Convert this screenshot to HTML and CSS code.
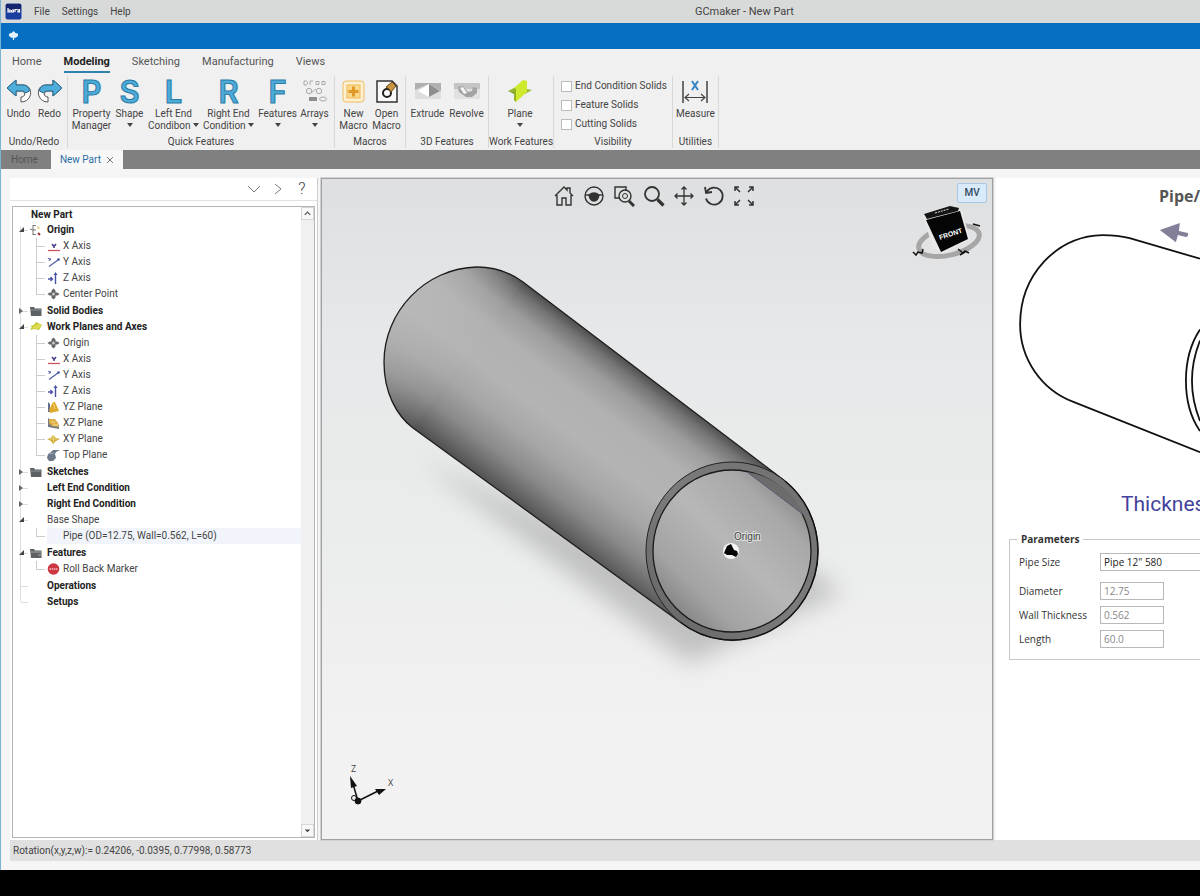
FILE: index.html
```html
<!DOCTYPE html>
<html lang="en">
<head>
<meta charset="utf-8">
<title>GCmaker - New Part</title>
<link rel="stylesheet" href="styles.css">
</head>
<body>
<svg class="defs" width="0" height="0" aria-hidden="true">
  <symbol id="i-x" viewBox="0 0 14 12"><path d="M1 10.500h12" stroke="#c8545c" stroke-width="1.300"/><path d="M5 4l2 2.500L9 4M7 6v2" stroke="#4a3c8c" stroke-width="1.500" fill="none"/></symbol>
  <symbol id="i-y" viewBox="0 0 14 12"><path d="M2 10.500L11 4" stroke="#5561a8" stroke-width="1.300"/><circle cx="11.500" cy="3.500" r="1.300" fill="#3f4fa5"/><path d="M1 2l3 2M2 5l1.500-3" stroke="#5561a8" fill="none"/></symbol>
  <symbol id="i-z" viewBox="0 0 14 12"><path d="M8.500 12V2" stroke="#4951a2" stroke-width="1.400"/><path d="M6.500 3h4l-2-3z" fill="#4951a2"/><path d="M1 7h4M3.500 5l2 2-2 2" stroke="#4951a2" fill="none" stroke-width="1.300"/></symbol>
  <symbol id="i-pt" viewBox="0 0 14 12"><path d="M6.500 .5l2 2v2h2l2 1.500-2 1.500h-2v2l-2 2-2-2v-2h-2L.5 6l2-1.500h2v-2z" fill="#666"/><circle cx="6.500" cy="6" r="1.500" fill="#c8c8c8"/></symbol>
  <symbol id="i-dir" viewBox="0 0 14 12"><path d="M1 2h4l1 1.500h6.500V11H2z" fill="#5d6163"/><path d="M2 5h10.500M9 8h4" stroke="#a5aaac"/></symbol>
  <symbol id="i-folder" viewBox="0 0 14 12"><path d="M1 2h4l1 1.500h6.500V11H2z" fill="#5d6163"/><path d="M2 5h10.500" stroke="#8d9294"/></symbol>
  <symbol id="i-origin" viewBox="0 0 14 12"><path d="M4 1v10M4 1.500h3M4 6h3M4 10.500h3M1 5l3 1" stroke="#777" fill="none"/><path d="M8 2l3 2-2 1z" fill="#d8b840"/><path d="M9 9l2 2" stroke="#a03030" stroke-width="2"/></symbol>
  <symbol id="i-wp" viewBox="0 0 14 12"><path d="M1 9l2-3-2-1 4-1 2-3 6 3-3 5-5-1z" fill="#c3c837"/><path d="M3 7l6-4 4 1-4 4z" fill="#dfdc52"/></symbol>
  <symbol id="i-yz" viewBox="0 0 14 12"><path d="M1 1v10h2V3z" fill="#5f6f8d"/><path d="M2 9l4-8h2l4 9-9 2z" fill="#dfaa2d"/><path d="M6 1l2 7" stroke="#f2d36f"/></symbol>
  <symbol id="i-xz" viewBox="0 0 14 12"><path d="M1 1v9l11 2V8z" fill="#767b80"/><path d="M2 2h6l3 4 1 4-7-1-3-3z" fill="#dcae43"/><path d="M4 5h4M6 8h5" stroke="#f5df9c"/></symbol>
  <symbol id="i-xy" viewBox="0 0 14 12"><path d="M0 6l4-1 2-3 3 3 4 1-4 2-3 3-2-3z" fill="#cfaa2e"/><path d="M3 6h7M6.500 3v6" stroke="#ecd77b"/></symbol>
  <symbol id="i-top" viewBox="0 0 14 12"><path d="M1 5l3-2 2-2h7l-4 2-1 2 1 4-3 3H2L0 9z" fill="#6b7889"/><path d="M2 5l5-1" stroke="#a3adb9"/></symbol>
  <symbol id="i-stop" viewBox="0 0 14 12"><circle cx="6.500" cy="6" r="5.800" fill="#cc3740"/><path d="M2.500 6h8" stroke="#f0a0a6" stroke-width="2" stroke-dasharray="1.500 .7"/></symbol>
</svg>

<div class="app">
  <header class="titlebar">
    <svg class="logo" viewBox="0 0 17 17" aria-hidden="true"><rect x=".5" y=".5" width="16" height="16" rx="2" fill="#1b3f9e"/><path d="M1 1h15v7H1z" fill="#14246d"/><path d="M3 5v4h2V7H3M6.500 7v2h2V7h-1.500M10 9V6.500h2M13 6v3h1.500V6" stroke="#fff" fill="none" stroke-width="1.200"/></svg>
    <nav class="menu"><a href="#">File</a><a href="#">Settings</a><a href="#">Help</a></nav>
    <h1 class="app-title">GCmaker - New Part</h1>
  </header>

  <div class="bluebar"><svg viewBox="0 0 8 8" aria-hidden="true"><path d="M4 0l1.500 1.500L8 2.500v2L6 6H4.500v2h-1V6H2L0 4.500v-2l2.500-1z" fill="#e4f2fc"/></svg></div>

  <section class="ribbon">
    <nav class="tabs">
      <a href="#">Home</a><a href="#" class="on">Modeling</a><a href="#">Sketching</a><a href="#">Manufacturing</a><a href="#">Views</a>
    </nav>
    <div class="groups">
      <div class="group">
        <div class="tools">
          <button class="w31"><svg class="ic" viewBox="0 0 28 26"><path d="M2 10l9-8v5h7c11 0 10 17-2 17v-5c5 0 5-6 0-6h-5v5z" fill="#fff" stroke="#555"/><path d="M2 10l9-8v5h7c4 0 6.500 3 6.500 6l-4 2c0-1-2-2-3.500-2h-6v5z" fill="#4eaedb" stroke="#28668a"/></svg><span>Undo</span></button>
          <button class="w31"><svg class="ic" viewBox="0 0 28 26"><path d="M26 10l-9-8v5h-7C-1 7 0 24 12 24v-5c-5 0-5-6 0-6h5v5z" fill="#fff" stroke="#555"/><path d="M26 10l-9-8v5h-7c-4 0-6.500 3-6.500 6l4 2c0-1 2-2 3.500-2h6v5z" fill="#4eaedb" stroke="#28668a"/></svg><span>Redo</span></button>
        </div>
        <div class="caption">Undo/Redo</div>
      </div>
      <div class="group quick">
        <div class="tools">
          <button class="w41"><b class="letter">P</b><span>Property<br>Manager</span></button>
          <button class="w35"><b class="letter">S</b><span>Shape</span><i class="caret"></i></button>
          <button class="w53"><b class="letter">L</b><span>Left End<br>Condibon <i class="caret"></i></span></button>
          <button class="w57"><b class="letter">R</b><span>Right End<br>Condition <i class="caret"></i></span></button>
          <button class="w41"><b class="letter">F</b><span>Features</span><i class="caret"></i></button>
          <button class="w33"><svg class="ic" viewBox="0 0 28 26"><g fill="none" stroke="#aaa"><path d="M3 3v4h2c2 0 2-4 0-4zM9 7V3h3M15 3.500h3v3h-3zM21 3.500h3v3h-3z"/><circle cx="8" cy="13" r="2.700"/><circle cx="18" cy="13" r="2.700"/><path d="M10 15l5-4"/><ellipse cx="22" cy="21" rx="3.500" ry="2"/></g><path d="M8 19h8v4H8z" fill="#8d8d8d"/></svg><span>Arrays</span><i class="caret"></i></button>
        </div>
        <div class="caption">Quick Features</div>
      </div>
      <div class="group">
        <div class="tools">
          <button class="w33"><svg class="ic" viewBox="0 0 28 26"><rect x="3" y="3" width="21" height="21" rx="3" fill="#fdf0d0" stroke="#efbe62"/><rect x="7" y="7" width="13" height="13" fill="#fad98c" stroke="#efb958"/><path d="M12 8.500h3V12h3.500v3H15v3.500h-3V15H8.500v-3H12z" fill="#df9a27"/></svg><span>New<br>Macro</span></button>
          <button class="w33"><svg class="ic" viewBox="0 0 28 26"><path d="M4 3h15l5 5v16H4z" fill="#fafafa" stroke="#333" stroke-width="1.500"/><ellipse cx="14" cy="15" rx="4" ry="4" fill="none" stroke="#222" stroke-width="2"/><path d="M13 9l6-5 4 4-5 6-2-3z" fill="#ca953f" stroke="#6b4a1c"/></svg><span>Open<br>Macro</span></button>
        </div>
        <div class="caption">Macros</div>
      </div>
      <div class="group">
        <div class="tools">
          <button class="w39"><svg class="ic" viewBox="0 0 28 26"><path d="M1 5h26v16H1z" fill="#dedede"/><path d="M1 5h26v8L15 6 1 12z" fill="#b0b0b0"/><path d="M4 13l11-7v13z" fill="#fff"/><path d="M15 6l11 7-11 6z" fill="#8e8e8e"/></svg><span>Extrude</span></button>
          <button class="w39"><svg class="ic" viewBox="0 0 28 26"><path d="M1 5h26v16H1z" fill="#e1e1e1"/><path d="M1 5h26v6H1z" fill="#c4c4c4"/><path d="M5 9l5-1 5 6 4-1 1-4 4 1v5l-5 4h-6l-7-5z" fill="#a3a3a3"/><path d="M7 10l3-1 4 6-3 1z" fill="#f4f4f4"/></svg><span>Revolve</span></button>
        </div>
        <div class="caption">3D Features</div>
      </div>
      <div class="group tight">
        <div class="tools">
          <button class="w62"><svg class="ic" viewBox="0 0 28 26"><path d="M2 13l8-4 16 3-9 5z" fill="#93b930"/><path d="M2 13l6 1v2z" fill="#7c9e28"/><path d="M8 10l9-8 4 1v11L10 24l-2-2z" fill="#cfe92f"/><path d="M8 10l2 1v13l-2-2z" fill="#8eb521"/></svg><span>Plane</span><i class="caret"></i></button>
        </div>
        <div class="caption">Work Features</div>
      </div>
      <div class="group">
        <div class="checks">
          <label><input type="checkbox">End Condition Solids</label>
          <label><input type="checkbox">Feature Solids</label>
          <label><input type="checkbox">Cutting Solids</label>
        </div>
        <div class="caption">Visibility</div>
      </div>
      <div class="group">
        <div class="tools">
          <button class="w41"><svg class="ic" viewBox="0 0 28 26"><path d="M2 3v22M26 3v22" stroke="#444" stroke-width="1.500"/><path d="M4 19.500h20M8 16l-4 3.500L8 23M20 16l4 3.500-4 3.500" stroke="#444" stroke-width="1.200" fill="none"/><path d="M11 3l6 9M17 3l-6 9" stroke="#3584c4" stroke-width="2"/></svg><span>Measure</span></button>
        </div>
        <div class="caption">Utilities</div>
      </div>
    </div>
  </section>

  <nav class="doctabs"><a href="#">Home</a><a href="#" class="on">New Part <svg viewBox="0 0 8 8"><path d="M1 1l6 6M7 1L1 7" stroke="#777"/></svg></a></nav>

  <main class="work">
    <aside class="browser">
      <div class="browser-tools">
        <button aria-label="Collapse"><svg viewBox="0 0 14 14"><path d="M1 4l6 6 6-6"/></svg></button>
        <button aria-label="Next"><svg viewBox="0 0 14 14"><path d="M4 2l6 5-6 5"/></svg></button>
        <button class="help" aria-label="Help">?</button>
      </div>
      <div class="treebox">
        <div class="tree">
          <div class="root">New Part</div>
          <ul class="top">
            <li><div class="row open"><svg><use href="#i-origin"/></svg><b>Origin</b></div>
              <ul>
                <li><svg><use href="#i-x"/></svg>X Axis</li>
                <li><svg><use href="#i-y"/></svg>Y Axis</li>
                <li><svg><use href="#i-z"/></svg>Z Axis</li>
                <li><svg><use href="#i-pt"/></svg>Center Point</li>
              </ul></li>
            <li><div class="row shut"><svg><use href="#i-folder"/></svg><b>Solid Bodies</b></div></li>
            <li><div class="row open"><svg><use href="#i-wp"/></svg><b>Work Planes and Axes</b></div>
              <ul>
                <li><svg><use href="#i-pt"/></svg>Origin</li>
                <li><svg><use href="#i-x"/></svg>X Axis</li>
                <li><svg><use href="#i-y"/></svg>Y Axis</li>
                <li><svg><use href="#i-z"/></svg>Z Axis</li>
                <li><svg><use href="#i-yz"/></svg>YZ Plane</li>
                <li><svg><use href="#i-xz"/></svg>XZ Plane</li>
                <li><svg><use href="#i-xy"/></svg>XY Plane</li>
                <li><svg><use href="#i-top"/></svg>Top Plane</li>
              </ul></li>
            <li><div class="row shut"><svg><use href="#i-folder"/></svg><b>Sketches</b></div></li>
            <li><div class="row shut"><svg></svg><b>Left End Condition</b></div></li>
            <li><div class="row shut"><svg></svg><b>Right End Condition</b></div></li>
            <li><div class="row open"><svg></svg>Base Shape</div>
              <ul><li class="picked"><svg></svg>Pipe (OD=12.75, Wall=0.562, L=60)</li></ul></li>
            <li><div class="row open"><svg><use href="#i-dir"/></svg><b>Features</b></div>
              <ul><li><svg><use href="#i-stop"/></svg>Roll Back Marker</li></ul></li>
            <li><div class="row"><svg></svg><b>Operations</b></div></li>
            <li><div class="row"><svg></svg><b>Setups</b></div></li>
          </ul>
        </div>
        <div class="scroll">
          <button aria-label="Scroll up"><svg viewBox="0 0 12 12"><path d="M3 7.500l3-3 3 3" fill="none" stroke="#555" stroke-width="1.300"/></svg></button>
          <button aria-label="Scroll down"><svg viewBox="0 0 12 12"><path d="M3 5h6L6 8z" fill="#444"/></svg></button>
        </div>
      </div>
    </aside>

    <section class="viewport">
      <svg class="scene" viewBox="322 179 670 660">
        <defs>
          <linearGradient id="body" gradientUnits="userSpaceOnUse" x1="413" y1="428" x2="523" y2="282">
            <stop offset="0" stop-color="#4e4e4e"/><stop offset=".07" stop-color="#686868"/><stop offset=".18" stop-color="#8b8b8b"/><stop offset=".33" stop-color="#a6a6a6"/><stop offset=".5" stop-color="#b4b4b4"/><stop offset=".7" stop-color="#b1b1b1"/><stop offset=".84" stop-color="#9c9c9c"/><stop offset=".94" stop-color="#747474"/><stop offset="1" stop-color="#4d4d4d"/>
          </linearGradient>
          <linearGradient id="bore" gradientUnits="userSpaceOnUse" x1="672" y1="610" x2="795" y2="485">
            <stop offset="0" stop-color="#848484"/><stop offset=".18" stop-color="#a3a3a3"/><stop offset=".5" stop-color="#b7b7b7"/><stop offset=".8" stop-color="#a8a8a8"/><stop offset="1" stop-color="#858585"/>
          </linearGradient>
          <linearGradient id="rim" x1="0" y1="1" x2="1" y2="0"><stop offset="0" stop-color="#646464"/><stop offset=".5" stop-color="#7c7c7c"/><stop offset="1" stop-color="#6e6e6e"/></linearGradient>
          <linearGradient id="light" gradientUnits="userSpaceOnUse" x1="400" y1="290" x2="480" y2="350"><stop offset="0" stop-color="#bbb" stop-opacity=".65"/><stop offset="1" stop-color="#bbb" stop-opacity="0"/></linearGradient>
          <filter id="soft" x="-20%" y="-20%" width="140%" height="140%"><feGaussianBlur stdDeviation="12"/></filter>
        </defs>
        <path d="M420 460L640 560l170 10 32 22-55 25-98 46z" fill="#bfc0c0" filter="url(#soft)"/>
        <path d="M523 282C508 271 493 267 477 267 425 268 384 312 384 362 384 392 396 415 413 428L680 622l105-141z" fill="url(#body)"/>
        <path d="M523 282C508 271 493 267 477 267 425 268 384 312 384 362 384 392 396 415 413 428z" fill="url(#light)"/>
        <path d="M680 622L413 428C396 415 384 392 384 362 384 312 425 268 477 267 493 267 508 271 523 282L785 481" fill="none" stroke="#1c1c1c" stroke-width="1.300"/>
        <ellipse cx="732" cy="551" rx="86" ry="89" fill="url(#rim)" stroke="#222"/>
        <path d="M680 622a86 89 0 0 0 138-71 86 89 0 0 0-33-70" fill="none" stroke="#111" stroke-width="1.500"/>
        <ellipse cx="732" cy="551" rx="79" ry="81" fill="url(#bore)" stroke="#1a1a1a" stroke-width="1.300"/>
        <path d="M747 472q38 6 57 43z" fill="#6c6c6c"/>
        <path d="M747 472l57 43" stroke="#5b5a70"/>
        <circle cx="731" cy="551" r="8" fill="#f5f5f5"/>
        <path d="M724 553l3-7 4-2 3 6 3 1 1 3-2 3-4-2h-5z" fill="#050505"/>
        <text class="origin-label" x="734" y="540">Origin</text>
        <g stroke="#111" fill="#111"><path d="M358 801l-5-17M358 801l20-10" stroke-width="1.500"/><path d="M350 776l7 10-6 2zM386 789l-11 0 4 6z" stroke="none"/><circle cx="358" cy="801" r="3"/><circle cx="354" cy="798" r="2.500" fill="none"/></g>
        <text class="axis-label" x="351" y="772">Z</text><text class="axis-label" x="388" y="786">X</text>
      </svg>
      <div class="viewtools">
        <button aria-label="Home view"><svg viewBox="0 0 22 22"><path d="M2 11l9-9 3 3V3h3v5l3 3M4 10v10h5v-7h4v7h5V10"/></svg></button>
        <button aria-label="Look"><svg viewBox="0 0 22 22"><circle cx="11" cy="11" r="9"/><path d="M2 10h18"/><path d="M6 10q5-4 10 0-1 6-5 6t-5-6z" fill="#333"/></svg></button>
        <button aria-label="Zoom window"><svg viewBox="0 0 22 22"><path d="M7 13H2V2h11v4"/><circle cx="12" cy="11" r="6"/><circle cx="12" cy="11" r="2.500" stroke-width="1"/><path d="M16 16l5 5" stroke-width="3"/></svg></button>
        <button aria-label="Zoom"><svg viewBox="0 0 22 22"><circle cx="9" cy="9" r="7" stroke-width="1.800"/><path d="M14.500 14.500l6 6" stroke-width="3.200"/></svg></button>
        <button aria-label="Pan"><svg viewBox="0 0 22 22"><path d="M11 2v18M2 11h18M8.500 4.500L11 2l2.500 2.500M8.500 17.500L11 20l2.500-2.500M4.500 8.500L2 11l2.500 2.500M17.500 8.500L20 11l-2.500 2.500" stroke-width="1.300"/></svg></button>
        <button aria-label="Rotate"><svg viewBox="0 0 22 22"><path d="M4 6.500a8.500 8.500 0 1 1-1 7M2 2l1 6 6-1" stroke-width="1.800"/></svg></button>
        <button aria-label="Fit"><svg viewBox="0 0 22 22"><path d="M2 6V2h4M2 2l5 5M16 2h4v4M20 2l-5 5M2 16v4h4M2 20l5-5M20 16v4h-4M20 20l-5-5" stroke-width="1.500"/></svg></button>
      </div>
      <div class="corner">
        <button class="mv">MV</button>
        <svg class="cube" viewBox="910 203 75 60" aria-hidden="true">
          <ellipse cx="949" cy="241" rx="31" ry="14" transform="rotate(-14 949 241)" fill="none" stroke="#a6a6a6" stroke-width="5"/>
          <path d="M923 215l28-9 11 4 8 30-28 14-10-8z" fill="#e8e8e8"/>
          <path d="M924 214l26-8 9 2-1 3-31 8z" fill="#151515"/><path d="M926 220l34-9 8 28-27 13z" fill="#050505"/><path d="M935 213l14-4" stroke="#ddd" stroke-dasharray="2 1"/>
          <text class="cube-label" x="940" y="240" transform="rotate(-18 940 240)">FRONT</text>
          <path d="M913 252l3 3 2-3 4 1 1-4M958 249l5 4 2-2 4 2M960 255l5-3M973 224l7 2" stroke="#111" stroke-width="1.500" fill="none"/>
        </svg>
      </div>
    </section>

    <aside class="props">
      <h2>Pipe/</h2>
      <svg class="drawing" viewBox="997 215 203 270" aria-hidden="true">
        <path d="M1160 230l20-7-1 8 9 2q1 3-2 4l-8-2-2 7z" fill="#84809a"/>
        <g fill="none" stroke="#111" stroke-width="1.800"><path d="M1200 258.500L1130 238C1118 235 1110 235 1103 235 1057 236 1021 275 1021 324 1021 358 1042 389 1074 401L1200 451"/><path d="M1200 329Q1186 350 1186 380T1200 430M1200 340Q1192 360 1192 380T1200 420"/></g>
      </svg>
      <p class="dim">Thickness</p>
      <fieldset>
        <legend>Parameters</legend>
        <div class="field first"><label for="size">Pipe Size</label><select id="size"><option>Pipe 12" 580</option></select></div>
        <div class="field"><label for="dia">Diameter</label><input id="dia" value="12.75"></div>
        <div class="field"><label for="wall">Wall Thickness</label><input id="wall" value="0.562"></div>
        <div class="field"><label for="len">Length</label><input id="len" value="60.0"></div>
      </fieldset>
    </aside>
  </main>

  <footer class="status">Rotation(x,y,z,w):= 0.24206, -0.0395, 0.77998, 0.58773</footer>
</div>
</body>
</html>
```
FILE: styles.css
```css
* { box-sizing: border-box; }
body {
  margin: 0;
  min-height: 100vh;
  display: flex;
  flex-direction: column;
  background: #000;
  color: #444;
  font: 10px/12px Roboto, "Noto Sans", sans-serif;
  overflow-x: hidden;
}
.defs { position: absolute; }
a { color: inherit; text-decoration: none; }
button { font: inherit; color: inherit; border: 0; padding: 0; background: none; }
ul { list-style: none; margin: 0; padding: 0; }

.app {
  flex: 1;
  display: flex;
  flex-direction: column;
  margin-bottom: 26px;
  background: #f5f5f5;
  border-left: 1px solid #79b4d4;
}

.titlebar {
  display: flex;
  align-items: center;
  height: 23px;
  background: #d8d9d9;
  position: relative;
}
.logo { width: 17px; height: 17px; margin: 0 12px 0 4px; }
.menu { display: flex; gap: 12px; }
.app-title {
  margin: 0;
  position: absolute;
  left: 62%;
  transform: translateX(-50%);
  font-size: 11px;
  font-weight: 400;
}
.bluebar { height: 26px; background: #076fc1; padding: 8px; }
.bluebar svg { display: block; width: 9px; height: 9px; }

.ribbon { background: #f0f0f0; height: 101px; }
.tabs { display: flex; height: 27px; padding-left: 11px; gap: 22px; align-items: flex-start; font-size: 11px; }
.tabs a { padding-top: 7px; height: 24px; color: #555; }
.tabs .on { color: #222; font-weight: 700; border-bottom: 2px solid #2d83ae; }
.groups { display: flex; height: 72px; }
.group {
  display: flex;
  flex-direction: column;
  justify-content: space-between;
  padding: 0 2px;
  border-right: 1px solid #d8d8d8;
}
.quick { padding: 0 3px; }
.tight { padding: 0; }
.tools { display: flex; align-items: flex-start; }
.tools button { display: flex; flex-direction: column; align-items: center; line-height: 12px; white-space: nowrap; }
.ic { width: 28px; height: 26px; margin: 2px 0 4px; }
.letter {
  height: 32px;
  font: 600 31px/31px "Inter", sans-serif;
  color: #4cabd8;
  -webkit-text-stroke: 1px #2e7ba6;
}
.caret {
  display: inline-block;
  border: 3px solid transparent;
  border-top: 4px solid #444;
  border-bottom: 0;
  vertical-align: 2px;
}
.tools button > .caret { margin-top: 3px; }
.w31 { width: 31px; }
.w33 { width: 33px; }
.w35 { width: 35px; }
.w39 { width: 39px; }
.w41 { width: 41px; }
.w53 { width: 53px; }
.w57 { width: 57px; }
.w62 { width: 62px; }
.caption { text-align: center; height: 12px; white-space: nowrap; }
.checks { display: flex; flex-direction: column; gap: 7px; padding: 4px 3px 0 5px; }
.checks label { display: flex; align-items: center; gap: 3px; white-space: nowrap; }
.checks input {
  appearance: none;
  width: 11px;
  height: 11px;
  margin: 0;
  background: #fff;
  border: 1px solid #bbb;
}

.doctabs { display: flex; height: 19px; background: #808080; line-height: 19px; }
.doctabs a { padding: 0 13px 0 10px; color: #555; }
.doctabs .on { display: flex; align-items: center; gap: 5px; padding: 0 9px; background: #f7f7f7; color: #2e6da4; }
.doctabs svg { width: 8px; height: 8px; }

.work {
  flex: 1;
  display: grid;
  grid-template-columns: 308px minmax(0, 1fr) 204px;
  gap: 3px;
  padding: 9px 0 0 9px;
}
.browser { display: flex; flex-direction: column; background: #fff; border-right: 1px solid #ccc; }
.browser-tools { display: flex; justify-content: flex-end; align-items: center; gap: 10px; height: 23px; padding-right: 8px; border-bottom: 1px solid #e2e2e2; }
.browser-tools svg { display: block; width: 14px; height: 14px; fill: none; stroke: #777; }
.help { font-size: 16px; width: 14px; font-weight: 300; }
.treebox { flex: 1; display: flex; margin: 5px 2px 2px; border: 1px solid #b5b5b5; }
.tree { flex: 1; min-width: 0; line-height: 16px; white-space: nowrap; }
.root { padding-left: 18px; line-height: 15px; font-weight: 700; color: #222; }
.tree b { color: #222; }
.tree svg { width: 14px; height: 12px; flex: none; }
.top { position: relative; }
.top::before { content: ""; position: absolute; left: 7px; top: 4px; bottom: 8px; border-left: 1px solid #ddd; }
.row { display: flex; align-items: center; height: 16px; gap: 4px; padding-left: 16px; position: relative; }
.row::before { content: ""; position: absolute; left: 8px; top: 8px; width: 7px; border-top: 1px solid #ddd; }
.row::after { content: ""; position: absolute; left: 6px; top: 5px; }
.open::after { border-left: 5px solid transparent; border-bottom: 5px solid #444; }
.shut::after { border: 3px solid transparent; border-left: 4px solid #666; border-right: 0; }
.top ul { margin-bottom: 1px; }
.top ul li { position: relative; display: flex; align-items: center; height: 16px; gap: 2px; margin-left: 34px; }
.top ul li::before { content: ""; position: absolute; left: -11px; top: 0; width: 8px; height: 8px; border-left: 1px solid #ccc; border-bottom: 1px solid #ccc; }
.top ul li:not(:last-child)::after { content: ""; position: absolute; left: -11px; top: 8px; height: 8px; border-left: 1px solid #ccc; }
.picked { background: #f1f5fb; }
.scroll { display: flex; flex-direction: column; justify-content: space-between; width: 13px; background: #f0f0f0; }
.scroll button { height: 13px; border: 1px solid #d6d6d6; background: #f8f8f8; }
.scroll svg { display: block; width: 11px; height: 11px; }

.viewport {
  position: relative;
  border: 1px solid #a0a0a0;
  outline: 1px solid #d2d2d6;
  background: linear-gradient(#dedfe0, #e7e8e9 25%, #ebecec 55%, #f2f2f2 85%);
  overflow: hidden;
}
.scene { position: absolute; inset: 0; width: 100%; height: 100%; }
.origin-label { font: 10px "Liberation Sans", sans-serif; fill: #444; stroke: #ddd; stroke-width: 2px; paint-order: stroke; }
.axis-label { font: 9px "Open Sans", sans-serif; fill: #444; }
.viewtools { position: absolute; top: 6px; left: 0; right: 6px; display: flex; justify-content: center; gap: 8px; }
.viewtools svg { display: block; width: 22px; height: 22px; fill: none; stroke: #333; stroke-width: 1.400; }
.corner { position: absolute; top: 4px; right: 5px; display: flex; flex-direction: column; align-items: flex-end; }
.mv { width: 30px; height: 20px; border: 1px solid #a9c8e4; border-radius: 2px; background: #d9ebfa; color: #34495e; font-weight: 500; }
.cube { width: 75px; height: 60px; margin-right: 2px; }
.cube-label { font: 700 7px "Liberation Sans", sans-serif; fill: #fff; }

.props { background: #fff; overflow: hidden; display: flex; flex-direction: column; font-family: "Open Sans", "Noto Sans", sans-serif; }
.props h2 { margin: 6px 0 0 163px; font-size: 16px; line-height: 24px; color: #555; }
.drawing { width: 100%; margin-top: 7px; }
.dim { margin: 5px 0 0 125px; font: 21px/26px Roboto, sans-serif; color: #42429a; white-space: nowrap; }
fieldset { margin: 15px 0 0 13px; padding: 0 0 5px 9px; border: 1px solid #c8c8c8; border-right: 0; min-width: 0; color: #333; }
legend { padding: 0 4px; margin-left: -2px; font-size: 10px; line-height: 14px; font-weight: 700; color: #333; }
.field { display: grid; grid-template-columns: 81px minmax(0, 1fr); align-items: center; margin-bottom: 6px; height: 18px; }
.field.first { margin: 7px 0 11px; }
.field input, .field select { height: 18px; border: 1px solid #b8b8b8; padding: 0 3px; background: #fff; color: #888; font: inherit; border-radius: 0; }
.field input { width: 64px; }
.field select { appearance: none; width: 100%; border-right: 0; color: #222; }

.status { height: 21px; margin: 0 0 9px 9px; padding: 0 3px; line-height: 22px; background: #e0e0e0; }
```
